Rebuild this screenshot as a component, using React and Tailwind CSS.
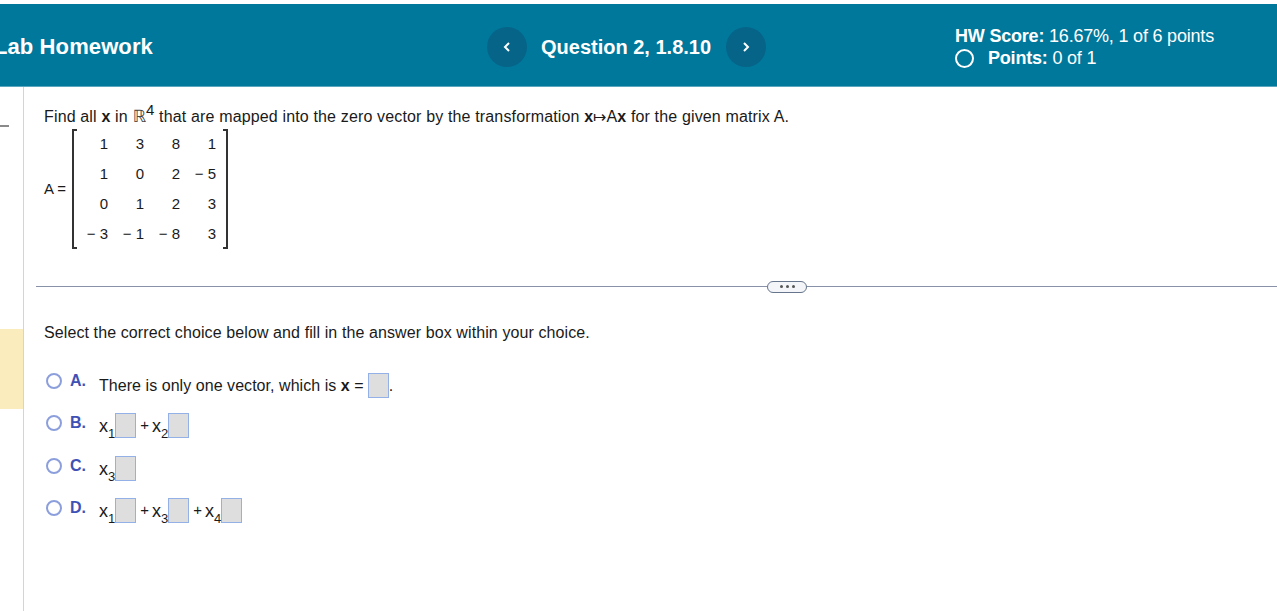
const matrix = [
  ['1', '3', '8', '1'],
  ['1', '0', '2', '− 5'],
  ['0', '1', '2', '3'],
  ['− 3', '− 1', '− 8', '3'],
]

function Chevron({ dir }) {
  return (
    <svg viewBox="0 0 10 12" className="w-[10px] h-[12px]" fill="none" stroke="white" strokeWidth="2">
      <path d={dir === 'left' ? 'M7 2 L3 6 L7 10' : 'M3 2 L7 6 L3 10'} />
    </svg>
  )
}

function NavButton({ dir }) {
  return (
    <div className="w-10 h-10 rounded-full bg-[#066488] flex items-center justify-center">
      <Chevron dir={dir} />
    </div>
  )
}

function Box({ className = '' }) {
  return <span className={`inline-block w-[21px] h-[25px] bg-[#dedede] border border-[#93b1e6] ${className}`} />
}

function Var({ n }) {
  return (
    <span className="text-[18px] leading-none mt-[3px]">
      x<sub className="text-[13px] leading-none align-[-3px]">{n}</sub>
    </span>
  )
}

function Plus() {
  return <span className="ml-[4px] mr-[3px] text-[15px]">+</span>
}

function Choice({ letter, className = '', children }) {
  return (
    <div className={`flex items-start h-[28px] ${className}`}>
      <span className="w-4 h-4 rounded-full border-2 border-[#8c9fdc] mt-[1px] ml-[2px]" />
      <span className="ml-[8px] w-[29px] font-bold text-[#3f51b5] leading-[18px]">{letter}</span>
      {children}
    </div>
  )
}

export default function App() {
  return (
    <div className="h-[611px] overflow-hidden bg-white text-[#1a1a1a] text-[16px] font-['Liberation_Sans',Arial,sans-serif]">
      <div className="h-[4px]" />
      <header className="h-[83px] pt-[4px] bg-[#00789c] text-white flex items-center border-b border-[#5ba6bf]">
        <div className="w-[493px] -ml-[6px] text-[22px] font-bold tracking-[0.1px] whitespace-nowrap -translate-y-[1px]">Lab Homework</div>
        <div className="w-[468px] flex items-center">
          <NavButton dir="left" />
          <span className="ml-[14px] w-[185px] text-[20px] font-bold">Question 2, 1.8.10</span>
          <NavButton dir="right" />
        </div>
        <div className="text-[18px] leading-[22px] tracking-[-0.2px]">
          <div><b>HW Score:</b> 16.67%, 1 of 6 points</div>
          <div className="flex items-center">
            <span className="w-[19px] h-[19px] rounded-full border-2 border-white mr-[14px]" />
            <span><b>Points:</b> 0 of 1</span>
          </div>
        </div>
      </header>

      <div className="flex h-[524px]">
        <aside className="w-[24px] shrink-0 border-r border-[#d0d4dc] pt-[38px]">
          <div className="w-[9px] h-[2px] bg-[#8a8a8a]" />
          <div className="mt-[202px] h-[80px] bg-[#fbecbd]" />
        </aside>

        <main className="flex-1 min-w-0 pl-[20px]">
          <p className="mt-[15px] h-[27px] leading-[24px] whitespace-nowrap tracking-[0.15px]">
            Find all <b>x</b> in <span className="font-['DejaVu_Sans',sans-serif] text-[17px] leading-none text-[#444]">ℝ</span>
            <sup className="text-[15px] leading-none align-[7px] relative top-0">4</sup> that are mapped into the zero vector by the transformation <b>x</b>↦A<b>x</b> for the given matrix A.
          </p>

          <div className="flex items-center h-[120px]">
            <span className="w-[28px] text-[15px]">A =</span>
            <div className="w-[156px] h-[120px] relative grid grid-cols-[36px_36px_36px_36px] auto-rows-[30px] items-center">
              <span className="absolute left-0 top-0 bottom-0 w-[5px] border-l-2 border-y-2 border-[#333]" />
              <span className="absolute right-0 top-0 bottom-0 w-[5px] border-r-2 border-y-2 border-[#333]" />
              {matrix.flat().map((v, i) => (
                <span key={i} className="text-right text-[15px] whitespace-nowrap">{v}</span>
              ))}
            </div>
          </div>

          <div className="mt-[32px] -ml-[8px] flex items-center h-[11px]">
            <div className="w-[731px] h-px bg-[#8792a8]" />
            <div className="w-[40px] h-[12px] shrink-0 rounded-full border border-[#66748c] bg-[#f3f5f8] flex items-center justify-center gap-[3px]">
              <span className="w-[3px] h-[3px] rounded-full bg-[#555]" />
              <span className="w-[3px] h-[3px] rounded-full bg-[#555]" />
              <span className="w-[3px] h-[3px] rounded-full bg-[#555]" />
            </div>
            <div className="flex-1 h-px bg-[#8792a8]" />
          </div>

          <p className="mt-[29px] h-[24px] leading-[24px] tracking-[0.1px]">Select the correct choice below and fill in the answer box within your choice.</p>

          <div className="mt-[27px]">
            <Choice letter="A." className="h-[42px]">
              <span className="flex items-center mt-[1px] h-[26px] whitespace-nowrap tracking-[0.05px]">
                There is only one vector, which is&nbsp;<b>x</b>&nbsp;=
                <Box className="ml-[4px] -mt-[2px]" />.
              </span>
            </Choice>
            <Choice letter="B." className="h-[43px]">
              <span className="flex items-center -mt-[1px]">
                <Var n="1" /><Box />
                <Plus />
                <Var n="2" /><Box />
              </span>
            </Choice>
            <Choice letter="C." className="h-[42px]">
              <span className="flex items-center -mt-[1px]">
                <Var n="3" /><Box />
              </span>
            </Choice>
            <Choice letter="D.">
              <span className="flex items-center -mt-[1px]">
                <Var n="1" /><Box />
                <Plus />
                <Var n="3" /><Box />
                <Plus />
                <Var n="4" /><Box />
              </span>
            </Choice>
          </div>
        </main>
      </div>
    </div>
  )
}
